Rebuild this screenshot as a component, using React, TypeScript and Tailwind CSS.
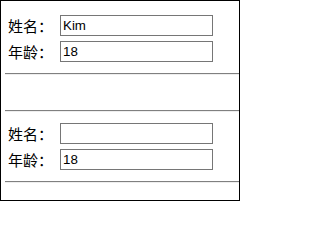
import React from "react";

function Row({ label, value }: { label: string; value: string }) {
  return (
    <div className="flex items-center h-[21px]">
      <span className="w-[52px] text-[15px] leading-[21px] text-black">
        {label}
      </span>
      <input
        readOnly
        value={value}
        className="w-[153px] h-[21px] border border-[#767676] px-[2px] text-[13.33px] text-black bg-white outline-none font-['Liberation_Sans',Arial,sans-serif]"
      />
    </div>
  );
}

function Rule() {
  return <div className="ml-[4px] h-[2px] border-t border-t-[#808080] border-b border-b-[#eeeeee]" />;
}

export default function App() {
  return (
    <div className="w-[240px] h-[201px] border border-black bg-white font-['Noto_Sans_CJK_SC',sans-serif] overflow-hidden">
      <div className="pl-[7px] pt-[14px] flex flex-col gap-[5px]">
        <Row label="姓名：" value="Kim" />
        <Row label="年龄：" value="18" />
      </div>
      <div className="mt-[11px]">
        <Rule />
      </div>
      <div className="mt-[35px]">
        <Rule />
      </div>
      <div className="pl-[7px] pt-[11px] flex flex-col gap-[5px]">
        <Row label="姓名：" value="" />
        <Row label="年龄：" value="18" />
      </div>
      <div className="mt-[11px]">
        <Rule />
      </div>
    </div>
  );
}
